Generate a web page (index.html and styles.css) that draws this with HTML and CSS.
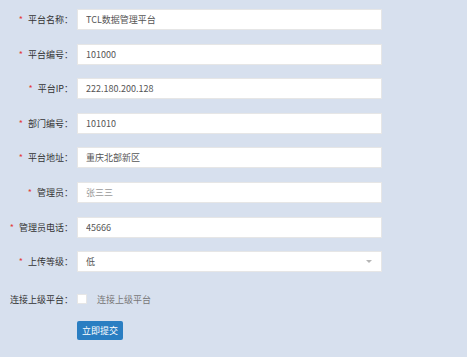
FILE: index.html
```
<!DOCTYPE html>
<html lang="zh-CN">

<head>
  <meta charset="UTF-8">
  <meta name="viewport" content="width=device-width, initial-scale=1.0">
  <title>平台信息</title>
  <link rel="stylesheet" href="styles.css">
</head>

<body>

  <form class="platform-form">
    <div class="row">
      <label class="label"><span class="req">*</span>平台名称：</label>
      <input class="field" type="text" value="TCL数据管理平台">
    </div>
    <div class="row">
      <label class="label"><span class="req">*</span>平台编号：</label>
      <input class="field" type="text" value="101000">
    </div>
    <div class="row">
      <label class="label"><span class="req">*</span>平台IP：</label>
      <input class="field" type="text" value="222.180.200.128">
    </div>
    <div class="row">
      <label class="label"><span class="req">*</span>部门编号：</label>
      <input class="field" type="text" value="101010">
    </div>
    <div class="row">
      <label class="label"><span class="req">*</span>平台地址：</label>
      <input class="field" type="text" value="重庆北部新区">
    </div>
    <div class="row">
      <label class="label"><span class="req">*</span>管理员：</label>
      <input class="field" type="text" placeholder="张三三">
    </div>
    <div class="row">
      <label class="label"><span class="req">*</span>管理员电话：</label>
      <input class="field" type="text" value="45666">
    </div>
    <div class="row">
      <label class="label"><span class="req">*</span>上传等级：</label>
      <div class="field select">
        <span>低</span>
        <i class="arrow"></i>
      </div>
    </div>
    <div class="row check-row">
      <label class="label">连接上级平台：</label>
      <label class="check">
        <input type="checkbox">
        <span>连接上级平台</span>
      </label>
    </div>
    <div class="row btn-row">
      <button type="button" class="submit">立即提交</button>
    </div>
  </form>

</body>
</html>
```

FILE: styles.css
```
body {
  font-family: 'Noto Sans CJK SC', 'Liberation Sans', sans-serif;
  font-size: 9px;
  background-color: #d7e0ee;
  color: #333;
  margin: 0;
  padding: 0;
}

.platform-form {
  padding-top: 9px;
}

.row {
  display: flex;
  align-items: center;
  height: 21px;
  margin-bottom: 13.6px;
}

.label {
  width: 73px;
  margin-right: 4px;
  text-align: right;
  white-space: nowrap;
  color: #333;
}

.req {
  color: #e33b3b;
  margin-right: 5px;
}

.field {
  width: 305px;
  height: 21px;
  box-sizing: border-box;
  padding: 0 8px;
  border: 1px solid #e6e6e6;
  background-color: #fff;
  font-family: inherit;
  font-size: 9px;
  color: #555;
  outline: none;
}

.field::placeholder {
  color: #999;
}

.select {
  display: flex;
  align-items: center;
  justify-content: space-between;
}

.arrow {
  width: 0;
  height: 0;
  border-left: 3px solid transparent;
  border-right: 3px solid transparent;
  border-top: 3px solid #b5b5b5;
  margin-right: 1px;
}

.check-row {
  margin-top: 21px;
  height: 12px;
  margin-bottom: 16px;
}

.check {
  display: flex;
  align-items: center;
  color: #777;
}

.check input {
  appearance: none;
  width: 10px;
  height: 10px;
  margin: 0 10px 0 0;
  background: #fff;
  border: 1px solid #e6e6e6;
  box-sizing: border-box;
}

.btn-row {
  padding-left: 77px;
  height: 19px;
}

.submit {
  background-color: #2a7ec2;
  color: #fff;
  font-family: inherit;
  font-size: 9px;
  width: 46px;
  height: 19px;
  padding: 0;
  border: none;
  border-radius: 2px;
  cursor: pointer;
}
```
